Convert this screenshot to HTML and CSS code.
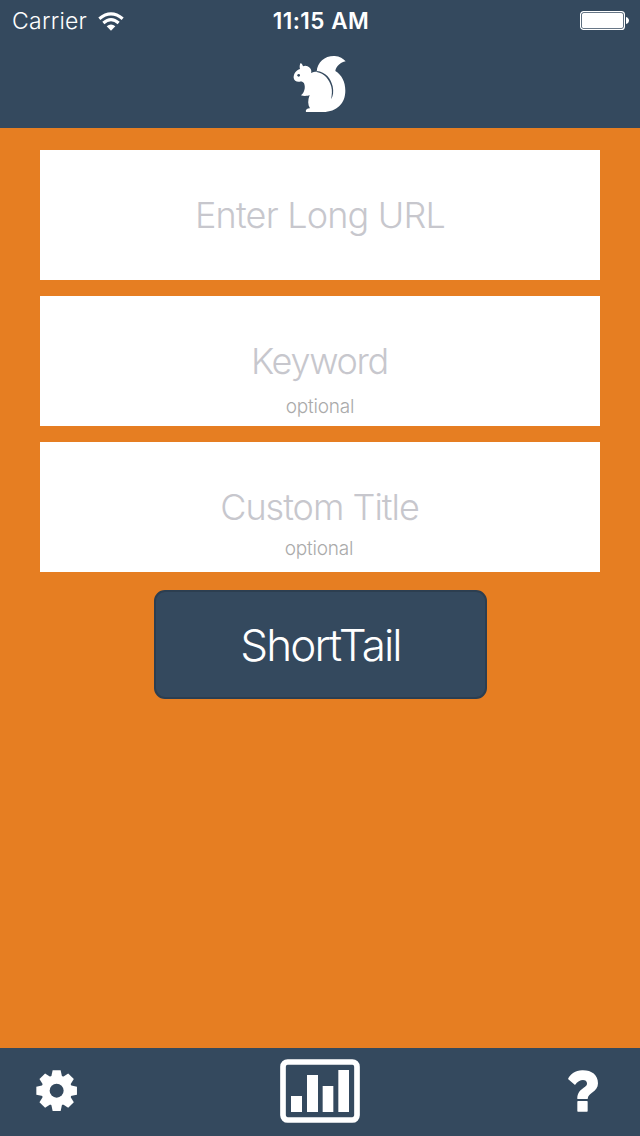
FILE: index.html
```html
<!DOCTYPE html>
<html lang="en">
<head>
<meta charset="utf-8">
<title>ShortTail</title>
<link rel="stylesheet" href="styles.css">
</head>
<body>
<div class="app">
  <header class="header">
    <div class="status">
      <div class="carrier"><span class="carrier-name">Carrier</span>
        <svg class="wifi" viewBox="0 0 78 57" width="26" height="19">
          <g fill="none" stroke="#fff" stroke-width="9.5">
            <path d="M4 20Q39-9 74 20"/><path d="M16 33Q39 13 62 33"/>
          </g>
          <path d="M26 43Q39 32 52 43L39 56Z" fill="#fff"/>
        </svg>
      </div>
      <div class="time">11:15 AM</div>
      <svg class="battery" viewBox="0 0 50 20" width="50" height="20">
        <rect x=".6" y=".6" width="43.8" height="17.8" rx="3" fill="none" stroke="#fff" stroke-width="1.2"/>
        <rect x="2" y="2" width="41" height="15" rx="1.6" fill="#fff"/>
        <path d="M46 6C50 7 50 12 46 13Z" fill="#fff"/>
      </svg>
    </div>
    <svg class="squirrel" viewBox="40 30 160 174" width="53.33" height="58">
      <path fill="#fff" d="M111 80C113 51 136 32 165 33C180 34 191 41 198 49C182 53 170 63 167 78C186 90 197 110 197 137C197 175 172 200 130 201L79 201C77 194 83 190 91 190C84 179 84 165 90 150C84 153 73 154 64 151C73 145 79 128 73 115C70 110 65 109 60 110C50 111 43 107 42 99C41 86 50 76 61 72C59 65 60 58 63 54C66 55 69 59 70 64C77 60 84 63 91 69C95 74 96 79 94 84C99 81 105 80 111 80Z"/>
      <path class="cut" d="M111 78C138 81 154 100 159 124C162 140 161 153 154 163C157 148 158 137 155 125C149 103 134 85 111 81Z"/>
      <circle class="cut" cx="57" cy="91" r="4"/>
    </svg>
  </header>
  <main class="form">
    <div class="field"><span class="placeholder url">Enter Long URL</span></div>
    <div class="field"><span class="placeholder keyword">Keyword</span><span class="hint">optional</span></div>
    <div class="field"><span class="placeholder title">Custom Title</span><span class="hint raised">optional</span></div>
    <button class="submit"><span>ShortTail</span></button>
  </main>
  <footer class="footer">
    <svg viewBox="-62 -62 124 124" width="41.3" height="41.3">
      <defs><path id="tooth" d="M-17-38L-12-61H12L17-38Z"/></defs>
      <g fill="#fff">
        <circle r="46"/>
        <use href="#tooth"/><use href="#tooth" transform="rotate(45)"/><use href="#tooth" transform="rotate(90)"/><use href="#tooth" transform="rotate(135)"/>
        <use href="#tooth" transform="rotate(180)"/><use href="#tooth" transform="rotate(225)"/><use href="#tooth" transform="rotate(270)"/><use href="#tooth" transform="rotate(315)"/>
      </g>
      <circle class="cut" r="21"/>
    </svg>
    <svg class="chart" viewBox="30 57 240 192" width="80" height="64">
      <rect x="39" y="66" width="222" height="174" rx="14" fill="none" stroke="#fff" stroke-width="17"/>
      <path fill="#fff" d="M63 168h33v48H63zM111 105h33v111h-33zM158 138h32v78h-32zM205 90h32v126h-32z"/>
    </svg>
    <svg class="help" viewBox="54 90 92 126" width="30.67" height="42">
      <path fill="#fff" d="M54 117C62 101 77 90 99 91C125 91 144 105 144 130C144 157 114 157 113 177H82C81 145 112 145 111 130C111 117 88 115 75 135ZM84 183h27q2 0 2 2v28q0 2-2 2H84q-2 0-2-2v-28q0-2 2-2z"/>
    </svg>
  </footer>
</div>
</body>
</html>
```
FILE: styles.css
```css
* { box-sizing: border-box; }
body { margin: 0; font-family: Inter, "Liberation Sans", sans-serif; }
.app { width: 640px; height: 1136px; display: flex; flex-direction: column; background: #e67e22; }
.header { height: 128px; background: #34495e; display: flex; flex-direction: column; align-items: center; }
.status { width: 100%; height: 41px; padding: 1px 10px 0 12px; display: grid; grid-template-columns: 1fr auto 1fr; align-items: center; color: #fff; font-size: 23px; line-height: 40px; }
.carrier { display: flex; align-items: center; gap: 11px; }
.carrier-name { font-weight: 350; letter-spacing: .25px; }
.time { font-weight: 600; font-size: 22.5px; letter-spacing: .5px; }
.battery { justify-self: end; }
.squirrel { margin-top: 14px; }
.cut { fill: #34495e; }
.form { flex: 1; padding: 22px 40px 0; display: flex; flex-direction: column; align-items: center; gap: 16px; }
.field { width: 560px; height: 130px; padding-top: 43px; background: #fff; display: flex; flex-direction: column; align-items: center; }
.placeholder { color: #c7c7cd; font-size: 36px; line-height: 44px; font-weight: 290; white-space: nowrap; }
.url { letter-spacing: -.8px; }
.keyword { letter-spacing: -1.3px; margin-right: 1px; }
.title { letter-spacing: -1px; margin-right: 1px; }
.hint { margin-top: 13px; color: #aaa; font-size: 19px; line-height: 22px; font-weight: 300; letter-spacing: -.2px; }
.raised { margin-top: 9px; margin-right: 2px; }
.submit { width: 333px; height: 109px; margin: 2px 0 0 1px; padding: 0; border: 2px solid #2c3e50; border-radius: 11px; background: #34495e; color: #fff; font-family: inherit; font-size: 44px; font-weight: 300; letter-spacing: -1.9px; }
.footer { height: 88px; padding: 0 41px 2px 36px; background: #34495e; display: grid; grid-template-columns: 1fr auto 1fr; align-items: center; }
.chart { margin: 0 -5px 0 0; }
.help { justify-self: end; }
```
